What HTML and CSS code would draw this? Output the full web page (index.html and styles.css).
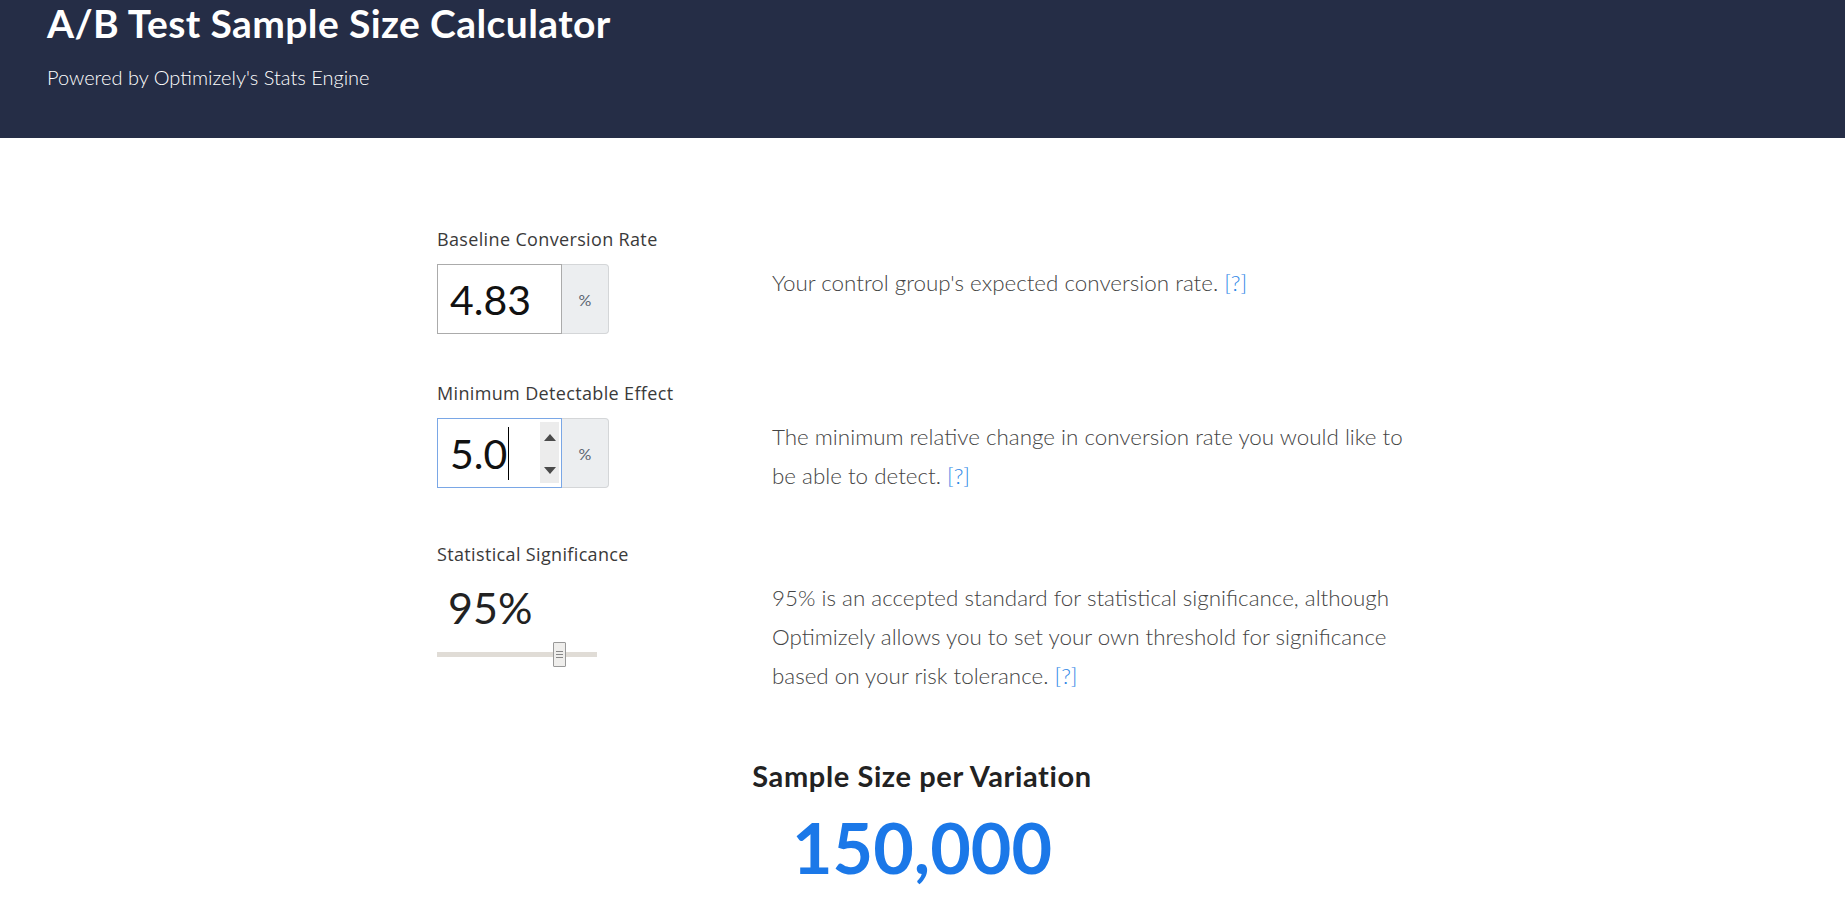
FILE: index.html
```html
<!DOCTYPE html>
<html lang="en">
<head>
<meta charset="utf-8">
<title>A/B Test Sample Size Calculator</title>
<link rel="stylesheet" href="styles.css">
</head>
<body>
<header class="hero">
  <h1 class="hero-title">A/B Test Sample Size Calculator</h1>
  <p class="hero-sub">Powered by Optimizely's Stats Engine</p>
</header>
<main class="calc">
  <section class="calc-row">
    <label class="calc-label">Baseline Conversion Rate</label>
    <div class="input-group">
      <div class="field"><span class="field-value">4.83</span></div>
      <div class="addon">%</div>
    </div>
    <p class="calc-desc">Your control group's expected conversion rate. <a class="help" href="#">[?]</a></p>
  </section>
  <section class="calc-row">
    <label class="calc-label">Minimum Detectable Effect</label>
    <div class="input-group">
      <div class="field field-focus">
        <span class="field-value">5.0</span><span class="caret"></span>
        <span class="spinner">
          <svg class="spin-arrow" width="16" height="9" viewBox="0 0 16 9"><path d="M2 8 L8 1 L14 8 Z" fill="#4a4a4a"/></svg>
          <svg class="spin-arrow" width="16" height="9" viewBox="0 0 16 9"><path d="M2 1 L8 8 L14 1 Z" fill="#4a4a4a"/></svg>
        </span>
      </div>
      <div class="addon">%</div>
    </div>
    <p class="calc-desc">The minimum relative change in conversion rate you would like to <span class="desc-end">be able to detect.</span> <a class="help" href="#">[?]</a></p>
  </section>
  <section class="calc-row">
    <label class="calc-label">Statistical Significance</label>
    <div class="sig">
      <div class="sig-value">95%</div>
      <div class="slider">
        <div class="slider-track"></div>
        <div class="slider-handle"><span></span><span></span><span></span></div>
      </div>
    </div>
    <p class="calc-desc">95% is an accepted standard for statistical significance, although Optimizely allows you to set your own threshold for significance <span class="desc-end">based on your risk tolerance.</span> <a class="help" href="#">[?]</a></p>
  </section>
  <section class="result">
    <h2 class="result-title">Sample Size per Variation</h2>
    <div class="result-value">150,000</div>
  </section>
</main>
</body>
</html>
```
FILE: styles.css
```css
html, body {
  margin: 0;
  padding: 0;
  background: #ffffff;
}
body {
  font-family: Lato, "Open Sans", sans-serif;
  color: #333;
}
.hero {
  background: #252d46;
  height: 138px;
  box-sizing: border-box;
  padding: 1px 0 0 47px;
  color: #fff;
}
.hero-title {
  margin: 0;
  font-size: 39px;
  line-height: 44px;
  font-weight: 700;
  letter-spacing: 0.4px;
}
.hero-sub {
  margin: 20px 0 0 0;
  font-size: 20px;
  line-height: 24px;
  font-weight: 300;
}
.calc {
  width: 985px;
  margin: 0 auto 0 437px;
  padding-top: 89px;
}
.calc-row {
  display: grid;
  grid-template-columns: 335px 650px;
  grid-template-rows: auto auto;
  margin-bottom: 47px;
}
.calc-label {
  grid-column: 1;
  grid-row: 1;
  font-family: "Open Sans", Lato, sans-serif;
  font-size: 18px;
  line-height: 24px;
  letter-spacing: 0.35px;
  padding-bottom: 13px;
  color: #3a3a3a;
}
.input-group {
  grid-column: 1;
  grid-row: 2;
  display: flex;
  align-self: start;
}
.field {
  width: 125px;
  height: 70px;
  box-sizing: border-box;
  border: 1px solid #ababab;
  display: flex;
  align-items: center;
  padding-left: 12px;
  position: relative;
  font-size: 41px;
  color: #111;
}
.field-focus {
  border-color: #7aa7e6;
}
.caret {
  display: inline-block;
  width: 1px;
  height: 53px;
  background: #000;
  margin-left: 1px;
}
.spinner {
  position: absolute;
  right: 2px;
  top: 3px;
  bottom: 4px;
  width: 19px;
  background: #ececec;
  display: flex;
  flex-direction: column;
  justify-content: space-between;
  align-items: center;
  padding: 11px 0 8px;
  box-sizing: border-box;
}
.spin-arrow {
  display: block;
}
.addon {
  width: 47px;
  height: 70px;
  box-sizing: border-box;
  background: #eceef0;
  border: 1px solid #d4d6d8;
  border-left: none;
  border-radius: 0 4px 4px 0;
  display: flex;
  align-items: center;
  justify-content: center;
  font-size: 16px;
  color: #5a6470;
}
.calc-desc {
  grid-column: 2;
  grid-row: 2;
  margin: -1px 0 0 0;
  font-size: 22.4px;
  line-height: 39px;
  font-weight: 300;
  color: #444;
}
.help {
  color: #2d86e6;
  text-decoration: none;
}
.sig {
  grid-column: 1;
  grid-row: 2;
}
.sig-value {
  font-size: 43px;
  line-height: 53px;
  padding: 2px 0 0 11px;
  color: #222;
}
.slider {
  position: relative;
  width: 160px;
  height: 25px;
  margin-top: 8px;
  display: flex;
  align-items: center;
}
.slider-track {
  width: 160px;
  height: 5px;
  background: #e0dcd6;
}
.slider-handle {
  position: absolute;
  left: 116px;
  top: 0;
  width: 13px;
  height: 25px;
  box-sizing: border-box;
  border: 1px solid #999;
  border-radius: 1px;
  background: #efeeec;
  display: flex;
  flex-direction: column;
  align-items: center;
  justify-content: center;
  gap: 2px;
}
.slider-handle span {
  display: block;
  width: 7px;
  height: 1px;
  background: #888;
}
.result {
  width: 970px;
  text-align: center;
  padding-top: 17px;
}
.result-title {
  margin: 0;
  font-size: 29px;
  line-height: 34px;
  font-weight: 700;
  letter-spacing: 0.6px;
  color: #222;
}
.result-value {
  font-size: 70px;
  line-height: 80px;
  font-weight: 700;
  color: #1b78e8;
  margin-top: 14px;
}
```
